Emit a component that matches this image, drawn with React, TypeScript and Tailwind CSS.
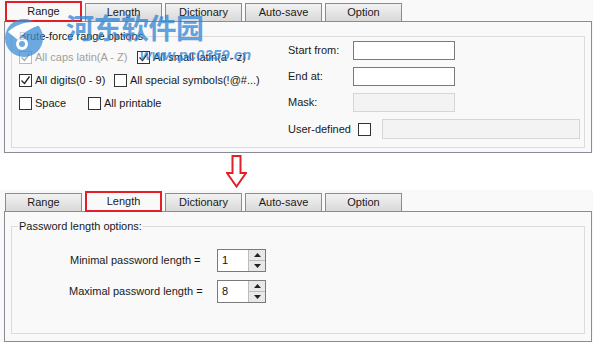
import type { ReactNode } from 'react'

const TABS = ['Range', 'Length', 'Dictionary', 'Auto-save', 'Option']

function Tabs({ active }: { active: number }) {
  return (
    <div className="flex items-end gap-[3px] pl-[1px] h-[20px] relative z-10">
      {TABS.map((t, i) =>
        i === active ? (
          <div
            key={t}
            className="w-[77px] h-[21px] mb-[-1px] flex items-center justify-center bg-[#f9f9f9] border-2 border-[#e21f26] text-[#1a1a1a]"
          >
            {t}
          </div>
        ) : (
          <div
            key={t}
            className="w-[77px] h-[18px] flex items-center justify-center border border-b-0 border-[#898c95] bg-gradient-to-b from-[#f2f2f2] to-[#d9d9d9] text-[#1a1a1a]"
          >
            {t}
          </div>
        )
      )}
    </div>
  )
}

function Check({ checked, disabled, label, className = '' }: { checked?: boolean; disabled?: boolean; label?: string; className?: string }) {
  return (
    <div className={`flex items-center gap-[3px] whitespace-nowrap ${className}`}>
      <div
        className={`w-[13px] h-[13px] shrink-0 border bg-white flex items-center justify-center ${disabled ? 'border-[#bcbcbc]' : 'border-[#333]'}`}
      >
        {checked && (
          <svg width="11" height="11" viewBox="0 0 11 11">
            <path d="M1.5 5.5 L4.5 8.5 L9.5 1.5" fill="none" stroke={disabled ? '#a8a8a8' : '#222'} strokeWidth="1.3" />
          </svg>
        )}
      </div>
      {label && <span className={disabled ? 'text-[#a0a0a0]' : 'text-[#1a1a1a]'}>{label}</span>}
    </div>
  )
}

function GroupBox({ title, children, className = '' }: { title: string; children: ReactNode; className?: string }) {
  return (
    <div className={`relative border border-[#dcdcdc] ${className}`}>
      <span className="absolute left-[6px] top-[-8px] bg-[#f9f9f9] px-[1px] leading-[14px] text-[#1a1a1a] whitespace-nowrap">{title}</span>
      {children}
    </div>
  )
}

function Spin({ value }: { value: string }) {
  return (
    <div className="flex w-[49px] h-[23px] border border-[#7a7a7a] bg-white">
      <div className="flex-1 pl-[4px] flex items-center text-[#111]">{value}</div>
      <div className="w-[17px] flex flex-col border-l border-[#bdbdbd] bg-[#e8e8e8]">
        <div className="flex-1 flex items-center justify-center border-b border-[#bdbdbd]">
          <svg width="7" height="4" viewBox="0 0 7 4"><path d="M0 4 L3.5 0 L7 4 Z" fill="#222" /></svg>
        </div>
        <div className="flex-1 flex items-center justify-center">
          <svg width="7" height="4" viewBox="0 0 7 4"><path d="M0 0 L3.5 4 L7 0 Z" fill="#222" /></svg>
        </div>
      </div>
    </div>
  )
}

function Watermark() {
  return (
    <div className="absolute left-[4px] top-[12px] z-20 pointer-events-none opacity-75">
      <div className="flex items-start">
        <svg width="42" height="46" viewBox="0 0 42 46">
          <circle cx="20" cy="26" r="19" fill="#3d8fd8" />
          <path d="M4 20 C14 10 30 8 42 12 C30 14 20 19 14 28 Z" fill="#ffffff" />
          <circle cx="18" cy="32" r="6" fill="#ffffff" />
          <circle cx="18" cy="32" r="3" fill="#3d8fd8" />
        </svg>
        <span className="ml-[20px] mt-[-3px] text-[28px] font-bold tracking-[-0.5px] text-[#2f86d6] font-['Noto_Sans_CJK_SC',sans-serif] leading-[36px]">
          河东软件园
        </span>
      </div>
      <div className="ml-[136px] mt-[-12px] text-[15px] font-bold italic text-[#2f86d6] font-['Liberation_Sans',sans-serif] leading-[18px]">
        www.pc0359.cn
      </div>
    </div>
  )
}

export default function App() {
  return (
    <div className="relative w-[599px] h-[342px] bg-white font-['Liberation_Sans',sans-serif] text-[11px] overflow-hidden">
      <Watermark />

      <div className="bg-[#f9f9f9] w-[593px] pt-[1px]">
        <div className="ml-[4px] w-[588px]">
          <Tabs active={0} />
          <div className="h-[132px] border border-[#898c95] bg-[#f9f9f9] pt-[14px] pl-[6px] pr-[6px]">
            <GroupBox title="Brute-force range options" className="h-[112px] flex">
              <div className="w-[270px] pl-[7px] pt-[13px] flex flex-col gap-[9px]">
                <div className="flex h-[14px]">
                  <Check checked disabled label="All caps latin(A - Z)" className="w-[118px]" />
                  <Check checked label="All small latin(a - z)" />
                </div>
                <div className="flex h-[14px]">
                  <Check checked label="All digits(0 - 9)" className="w-[95px]" />
                  <Check label="All special symbols(!@#...)" />
                </div>
                <div className="flex h-[14px]">
                  <Check label="Space" className="w-[69px]" />
                  <Check label="All printable" />
                </div>
              </div>
              <div className="ml-[6px] pt-[4px] flex flex-col gap-[7px] text-[#1a1a1a]">
                <div className="flex items-center h-[19px]">
                  <span className="w-[65px]">Start from:</span>
                  <div className="w-[102px] h-[19px] border border-[#7a7a7a] bg-white" />
                </div>
                <div className="flex items-center h-[19px]">
                  <span className="w-[65px]">End at:</span>
                  <div className="w-[102px] h-[19px] border border-[#7a7a7a] bg-white" />
                </div>
                <div className="flex items-center h-[19px]">
                  <span className="w-[65px]">Mask:</span>
                  <div className="w-[102px] h-[19px] border border-[#d6d6d6] bg-[#f3f3f3]" />
                </div>
                <div className="flex items-center h-[20px]">
                  <span className="w-[70px] whitespace-nowrap">User-defined</span>
                  <Check />
                  <div className="ml-[11px] w-[198px] h-[20px] border border-[#d6d6d6] bg-[#f3f3f3]" />
                </div>
              </div>
            </GroupBox>
          </div>
        </div>
      </div>

      <div className="h-[37px] flex items-start pl-[226px] pt-[2px]">
        <svg width="21" height="33" viewBox="0 0 21 33">
          <path d="M6.5 1 H14.5 V18 H20 L10.5 31.5 L1 18 H6.5 Z" fill="none" stroke="#e21f26" strokeWidth="2" />
        </svg>
      </div>

      <div className="bg-[#f9f9f9] w-[593px] pt-[1px]">
        <div className="ml-[4px] w-[588px]">
          <Tabs active={1} />
          <div className="h-[131px] border border-[#898c95] bg-[#f9f9f9] pt-[14px] pl-[6px] pr-[6px]">
            <GroupBox title="Password length options:" className="h-[108px]">
              <div className="pt-[22px] flex flex-col gap-[8px] text-[#1a1a1a]">
                <div className="flex items-center">
                  <span className="ml-[58px] w-[147px] whitespace-nowrap">Minimal password length =</span>
                  <Spin value="1" />
                </div>
                <div className="flex items-center">
                  <span className="ml-[57px] w-[148px] whitespace-nowrap">Maximal password length =</span>
                  <Spin value="8" />
                </div>
              </div>
            </GroupBox>
          </div>
        </div>
      </div>
    </div>
  )
}
